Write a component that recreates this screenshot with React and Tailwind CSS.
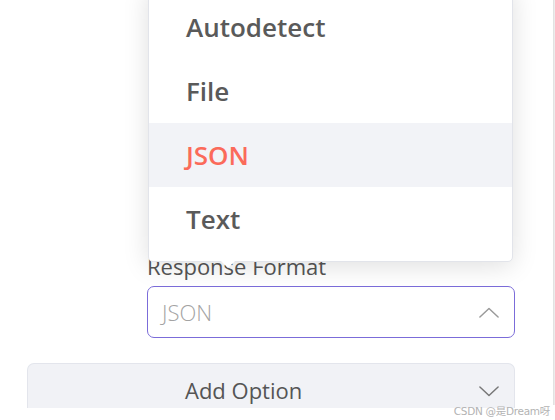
import React from "react";

const options = ["Autodetect", "File", "JSON", "Text"];

function ChevronUp({ className }) {
  return (
    <svg viewBox="0 0 22 12" className={className} fill="none" stroke="currentColor" strokeWidth="1.6" strokeLinecap="round" strokeLinejoin="round">
      <path d="M1 11 L11 1.5 L21 11" />
    </svg>
  );
}

function ChevronDown({ className }) {
  return (
    <svg viewBox="0 0 22 12" className={className} fill="none" stroke="currentColor" strokeWidth="1.6" strokeLinecap="round" strokeLinejoin="round">
      <path d="M1 1 L11 10.5 L21 1" />
    </svg>
  );
}

export default function App() {
  const selected = "JSON";
  return (
    <div
      className="relative w-[555px] h-[420px] overflow-hidden bg-white flex"
      style={{ fontFamily: '"Open Sans", "Noto Sans", sans-serif' }}
    >
      {/* form column */}
      <div className="flex-1 flex flex-col pt-[251px] pl-[27px] pr-[38px]">
        <div className="pl-[120px] flex flex-col gap-[5px]">
          <label className="text-[22px] leading-[30px] text-[#555]">Response Format</label>
          <div className="h-[52px] rounded-[7px] border-[1.5px] border-[#7b6cd9] flex items-center justify-between pl-[14px] pr-[15px]">
            <span className="text-[22px] text-[#a3a3a3] font-light">JSON</span>
            <ChevronUp className="w-[20px] h-[11px] text-[#9a9a9a]" />
          </div>
        </div>

        <div className="mt-[25px] h-[45px] rounded-t-[7px] border border-b-0 border-[#e3e5ec] bg-[#f1f2f6] flex items-start pt-[11px] pl-[157px] pr-[15px]">
          <span className="text-[22px] leading-[30px] text-[#555] flex-1">Add Option</span>
          <ChevronDown className="w-[20px] h-[11px] text-[#777] mt-[11px]" />
        </div>

        <div className="flex justify-end -mr-[35px] mt-[-4px]">
          <span
            className="text-[10.5px] leading-[14px] text-[#b3b3b3]"
            style={{ fontFamily: '"DejaVu Sans", "Noto Sans CJK SC", sans-serif', letterSpacing: "-0.3px" }}
          >
            CSDN @是Dream呀
          </span>
        </div>
      </div>

      {/* scroll track edge */}
      <div className="w-[2px] h-[405px] bg-[#ececec] border-l border-[#e2e2e2]" />

      {/* open dropdown menu */}
      <div className="absolute left-[148px] top-[-14px] w-[365px] rounded-[5px] border border-[#e2e4ea] bg-white pt-2 pb-[10px] shadow-[0_4px_26px_rgba(0,0,0,0.13)]">
        {options.map((opt) => (
          <div
            key={opt}
            className={
              "h-[64px] flex items-center pl-[37px] text-[26px] font-semibold " +
              (opt === selected ? "bg-[#f2f3f7] text-[#fb6a5a]" : "text-[#5a5a5a]")
            }
          >
            {opt}
          </div>
        ))}
        <div className="absolute left-[74px] bottom-[-5px] w-[10px] h-[10px] rotate-45 bg-white" />
      </div>
    </div>
  );
}
